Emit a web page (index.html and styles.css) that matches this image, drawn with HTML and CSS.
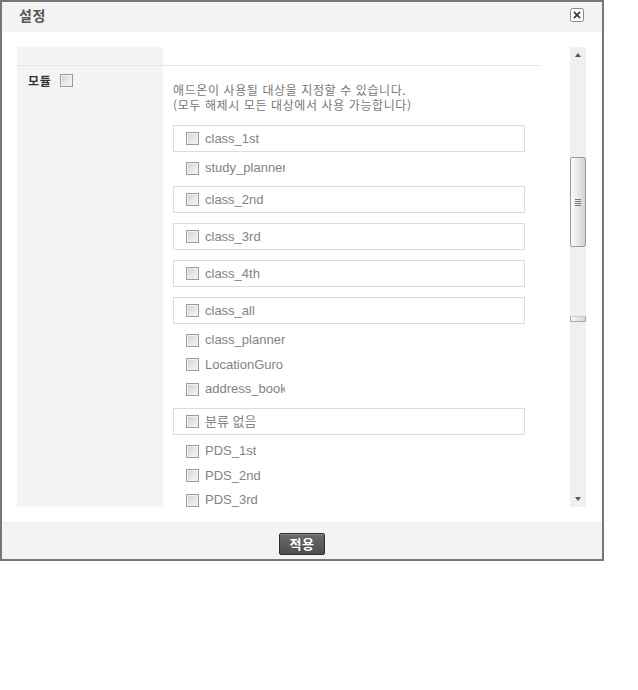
FILE: index.html
```html
<!DOCTYPE html>
<html lang="ko">
<head>
<meta charset="utf-8">
<title>설정</title>
<link rel="stylesheet" href="styles.css">
</head>
<body>
<div class="dialog">
  <div class="header">
    <h1 class="title">설정</h1>
    <button class="close" type="button" aria-label="닫기">
      <svg width="14" height="14" viewBox="0 0 14 14">
        <rect x="0.5" y="0.5" width="13" height="13" rx="2" fill="#fff" stroke="#8a8a8a"/>
        <path d="M4.5 4.5 L9.5 9.5 M9.5 4.5 L4.5 9.5" stroke="#333" stroke-width="1.7" stroke-linecap="square"/>
      </svg>
    </button>
  </div>
  <div class="body">
    <div class="scroll">
      <div class="viewport">
        <div class="grid">
          <div class="row row-top">
            <div class="cell-left"></div>
            <div class="cell-right"></div>
          </div>
          <div class="row">
            <div class="cell-left">
              <span class="field-name">모듈</span>
              <span class="cb"></span>
            </div>
            <div class="cell-right">
              <p class="desc">애드온이 사용될 대상을 지정할 수 있습니다.<br>(모두 해제시 모든 대상에서 사용 가능합니다)</p>

              <div class="group">
                <div class="box"><span class="cb"></span><span class="lbl">class_1st</span></div>
                <div class="list">
                  <div class="item"><span class="cb"></span><span class="lbl cut">study_planner</span></div>
                </div>
              </div>
              <div class="group">
                <div class="box"><span class="cb"></span><span class="lbl">class_2nd</span></div>
              </div>
              <div class="group">
                <div class="box"><span class="cb"></span><span class="lbl">class_3rd</span></div>
              </div>
              <div class="group">
                <div class="box"><span class="cb"></span><span class="lbl">class_4th</span></div>
              </div>
              <div class="group">
                <div class="box"><span class="cb"></span><span class="lbl">class_all</span></div>
                <div class="list">
                  <div class="item"><span class="cb"></span><span class="lbl cut">class_planner</span></div>
                  <div class="item"><span class="cb"></span><span class="lbl cut">LocationGuro</span></div>
                  <div class="item"><span class="cb"></span><span class="lbl cut">address_book</span></div>
                </div>
              </div>
              <div class="group">
                <div class="box"><span class="cb"></span><span class="lbl">분류 없음</span></div>
                <div class="list">
                  <div class="item"><span class="cb"></span><span class="lbl cut">PDS_1st</span></div>
                  <div class="item"><span class="cb"></span><span class="lbl cut">PDS_2nd</span></div>
                  <div class="item"><span class="cb"></span><span class="lbl cut">PDS_3rd</span></div>
                  <div class="item"><span class="cb"></span><span class="lbl cut">PDS_4th</span></div>
                </div>
              </div>
            </div>
          </div>
        </div>
      </div>
      <div class="scrollbar">
        <div class="sb-btn"><span class="arrow-up"></span></div>
        <div class="thumb"><span class="grip"></span></div>
        <div class="thumb-ghost"></div>
        <div class="sb-fill"></div>
        <div class="sb-btn"><span class="arrow-down"></span></div>
      </div>
    </div>
  </div>
  <div class="footer">
    <button class="apply" type="button">적용</button>
  </div>
</div>
</body>
</html>
```
FILE: styles.css
```css
html, body {
  margin: 0;
  padding: 0;
  background: #fff;
}
body {
  font-family: "Liberation Sans", "Noto Sans CJK KR", sans-serif;
  font-size: 12px;
  color: #777;
}
.dialog {
  width: 600px;
  border: 2px solid #777;
  background: #fff;
}
.header {
  height: 30px;
  background: #f3f3f3;
  display: flex;
  align-items: center;
  justify-content: space-between;
  padding: 0 18px 0 17px;
}
.title {
  margin: 0;
  font-family: "Noto Sans CJK KR", sans-serif;
  font-size: 14px;
  font-weight: bold;
  color: #555;
  line-height: 18px;
  letter-spacing: 0.5px;
  position: relative;
  top: -2px;
}
.close {
  width: 14px;
  height: 14px;
  padding: 0;
  margin: 0;
  border: 0;
  background: none;
  display: block;
  position: relative;
  top: -2px;
}
.close svg { display: block; }
.body {
  padding: 15px 16px 15px 15px;
}
.scroll {
  height: 460px;
  display: flex;
}
.viewport {
  flex: 1;
  overflow: hidden;
}
.grid {
  width: 524px;
}
.row {
  display: flex;
}
.row-top {
  height: 18px;
  border-bottom: 1px solid #e6e6e6;
}
.cell-left {
  width: 146px;
  background: #f4f4f4;
  flex: none;
}
.row:not(.row-top) .cell-left {
  display: flex;
  align-items: flex-start;
  gap: 9px;
  padding: 8px 0 0 11px;
  box-sizing: border-box;
}
.field-name {
  font-family: "Noto Sans CJK KR", sans-serif;
  font-weight: bold;
  font-size: 12px;
  letter-spacing: 0.6px;
  color: #333;
  line-height: 14px;
}
.cell-right {
  flex: 1;
  padding: 16px 0 0 10px;
}
.row-top .cell-right { padding: 0; }
.desc {
  margin: 0 0 13px;
  font-family: "Noto Sans CJK KR", sans-serif;
  font-size: 12px;
  line-height: 15px;
  letter-spacing: 0.6px;
  color: #777;
}
.group {
  width: 352px;
  margin-bottom: 10px;
}
.box {
  height: 25px;
  border: 1px solid #dcdcdc;
  display: flex;
  align-items: center;
  padding-left: 12px;
  gap: 6px;
}
.list {
  padding-top: 4px;
  margin-bottom: -3.5px;
}
.group:first-of-type .list {
  margin-bottom: -4.5px;
}
.item {
  height: 24.5px;
  display: flex;
  align-items: center;
  padding-left: 13px;
  gap: 6px;
}
.lbl {
  font-family: "Liberation Sans", "Noto Sans CJK KR", sans-serif;
  font-size: 13px;
  line-height: 16px;
  color: #838383;
  white-space: nowrap;
}
.cut {
  max-width: 80px;
  overflow: hidden;
}
.cb {
  display: block;
  flex: none;
  width: 11px;
  height: 11px;
  border: 1px solid #9c9c9c;
  background: linear-gradient(135deg, #cfcfcf 0%, #e6e6e6 50%, #f7f7f7 100%);
  box-shadow: inset 0 0 0 1px #f0f0f0;
}
.scrollbar {
  width: 16px;
  flex: none;
  background: #f0f0f0;
  display: flex;
  flex-direction: column;
}
.sb-btn {
  height: 16px;
  display: flex;
  align-items: center;
  justify-content: center;
  flex: none;
}
.arrow-up, .arrow-down {
  width: 0;
  height: 0;
  border-left: 3px solid transparent;
  border-right: 3px solid transparent;
}
.arrow-up { border-bottom: 4px solid #555; }
.arrow-down { border-top: 4px solid #555; }
.thumb {
  margin-top: 94px;
  height: 88px;
  border: 1px solid #9a9a9a;
  border-radius: 2px;
  background: linear-gradient(to right, #fbfbfb 0%, #e9e9e9 50%, #d2d2d2 100%);
  display: flex;
  align-items: center;
  justify-content: center;
  flex: none;
}
.grip {
  display: block;
  width: 6px;
  height: 7px;
  background: repeating-linear-gradient(to bottom, #777 0, #777 1px, transparent 1px, transparent 2px);
}
.thumb-ghost {
  margin-top: 69px;
  height: 4px;
  border: 1px solid #a8a8a8;
  border-top-color: #ccc;
  background: linear-gradient(to right, #f8f8f8, #d4d4d4);
  flex: none;
}
.sb-fill { flex: 1; }
.footer {
  height: 37px;
  background: #f3f3f3;
  border-top: 1px solid #ececec;
  box-sizing: border-box;
  display: flex;
  justify-content: center;
  align-items: flex-start;
  padding-top: 10px;
}
.apply {
  width: 46px;
  height: 22px;
  margin: 0;
  padding: 0;
  border: 1px solid #2f2f2f;
  border-radius: 2px;
  background: linear-gradient(to bottom, #6a6a6a 0%, #4e4e4e 100%);
  box-shadow: inset 0 1px 0 #888;
  color: #fff;
  font-family: "Noto Sans CJK KR", sans-serif;
  font-size: 13px;
  font-weight: bold;
  letter-spacing: 0.5px;
  line-height: 18px;
}
```
